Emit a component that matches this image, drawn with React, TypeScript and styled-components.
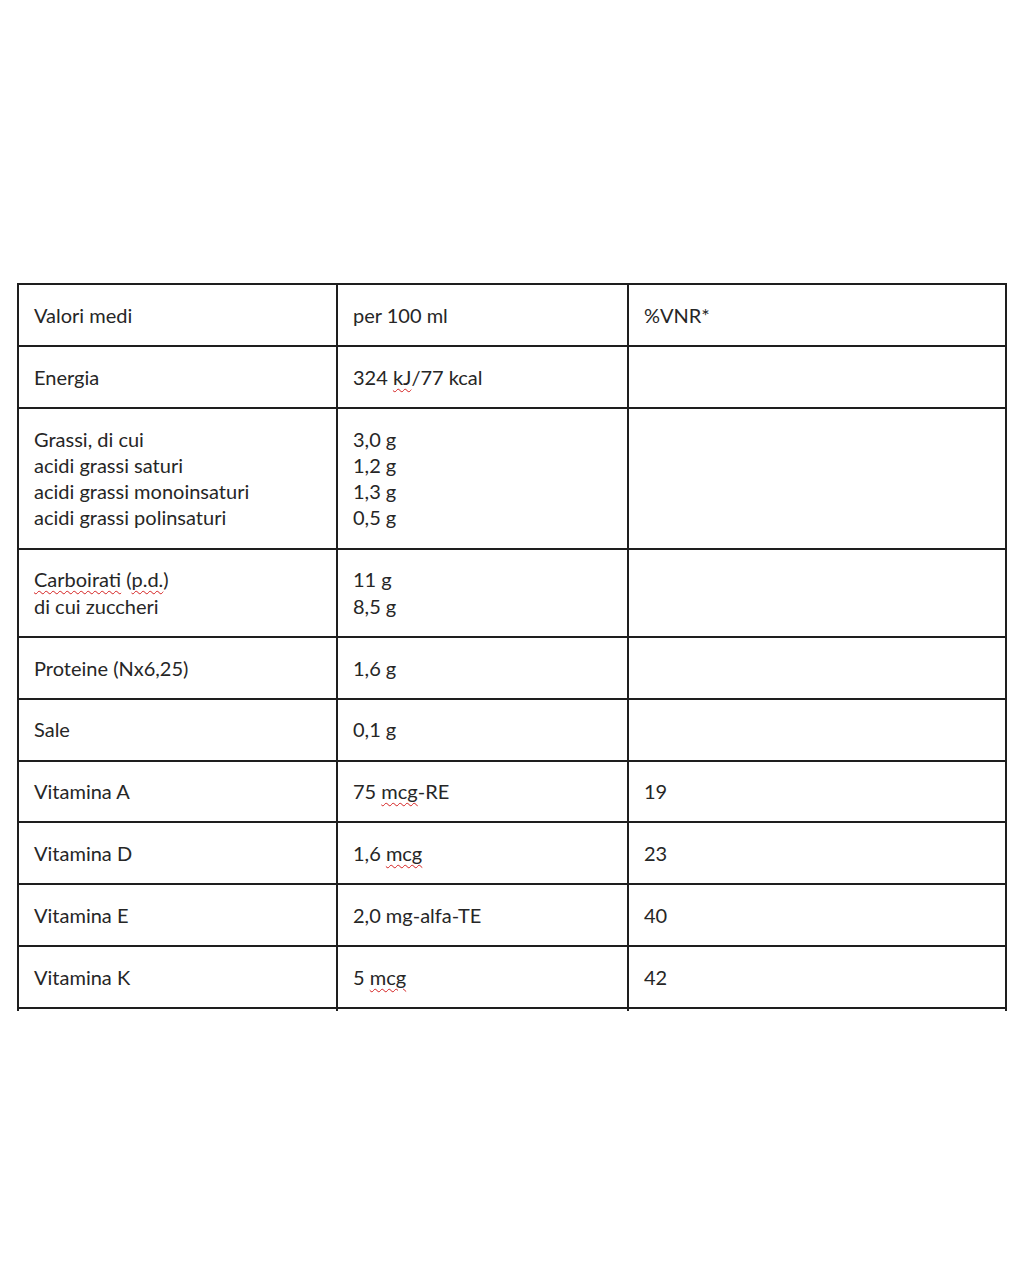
import styled, { createGlobalStyle } from "styled-components";

const GlobalStyle = createGlobalStyle`
  html, body {
    margin: 0;
    padding: 0;
    background: #ffffff;
  }
  body {
    font-family: Lato, "Liberation Sans", sans-serif;
    color: #262626;
  }
`;

const Page = styled.div`
  width: 1020px;
  height: 1282px;
  padding: 283px 0 0 17px;
  box-sizing: border-box;
`;

const Table = styled.table`
  border-collapse: collapse;
  table-layout: fixed;
  width: 988px;
  font-size: 20px;
  line-height: 26.3px;
`;

const Col = styled.col<{ $w: number }>`
  width: ${(p) => p.$w}px;
`;

const Cell = styled.td`
  border: 2px solid #1e1e1e;
  padding: 16.8px 15px 16.8px 15px;
  vertical-align: top;
  text-align: left;
  white-space: nowrap;
`;

const TailCell = styled.td`
  border-left: 2px solid #1e1e1e;
  border-right: 2px solid #1e1e1e;
  border-bottom: none;
  height: 2px;
  padding: 0;
`;

const Line = styled.div``;

const Typo = styled.span`
  text-decoration: underline wavy #d42020;
  text-decoration-thickness: 1px;
  text-underline-offset: 3px;
`;

interface IRow {
  name: React.ReactNode[];
  value: React.ReactNode[];
  vnr?: string;
}

const rows: IRow[] = [
  { name: ["Valori medi"], value: ["per 100 ml"], vnr: "%VNR*" },
  {
    name: ["Energia"],
    value: [
      <>
        324 <Typo>kJ</Typo>/77 kcal
      </>,
    ],
  },
  {
    name: [
      "Grassi, di cui",
      "acidi grassi saturi",
      "acidi grassi monoinsaturi",
      "acidi grassi polinsaturi",
    ],
    value: ["3,0 g", "1,2 g", "1,3 g", "0,5 g"],
  },
  {
    name: [
      <>
        <Typo>Carboirati</Typo> (<Typo>p.d.</Typo>)
      </>,
      "di cui zuccheri",
    ],
    value: ["11 g", "8,5 g"],
  },
  { name: ["Proteine (Nx6,25)"], value: ["1,6 g"] },
  { name: ["Sale"], value: ["0,1 g"] },
  {
    name: ["Vitamina A"],
    value: [
      <>
        75 <Typo>mcg</Typo>-RE
      </>,
    ],
    vnr: "19",
  },
  {
    name: ["Vitamina D"],
    value: [
      <>
        1,6 <Typo>mcg</Typo>
      </>,
    ],
    vnr: "23",
  },
  { name: ["Vitamina E"], value: ["2,0 mg-alfa-TE"], vnr: "40" },
  {
    name: ["Vitamina K"],
    value: [
      <>
        5 <Typo>mcg</Typo>
      </>,
    ],
    vnr: "42",
  },
];

function App() {
  return (
    <Page>
      <GlobalStyle />
      <Table>
        <colgroup>
          <Col $w={319} />
          <Col $w={291} />
          <Col $w={378} />
        </colgroup>
        <tbody>
          {rows.map((row, i) => (
            <tr key={i}>
              <Cell>
                {row.name.map((n, j) => (
                  <Line key={j}>{n}</Line>
                ))}
              </Cell>
              <Cell>
                {row.value.map((v, j) => (
                  <Line key={j}>{v}</Line>
                ))}
              </Cell>
              <Cell>{row.vnr}</Cell>
            </tr>
          ))}
          <tr>
            <TailCell />
            <TailCell />
            <TailCell />
          </tr>
        </tbody>
      </Table>
    </Page>
  );
}

export default App;
